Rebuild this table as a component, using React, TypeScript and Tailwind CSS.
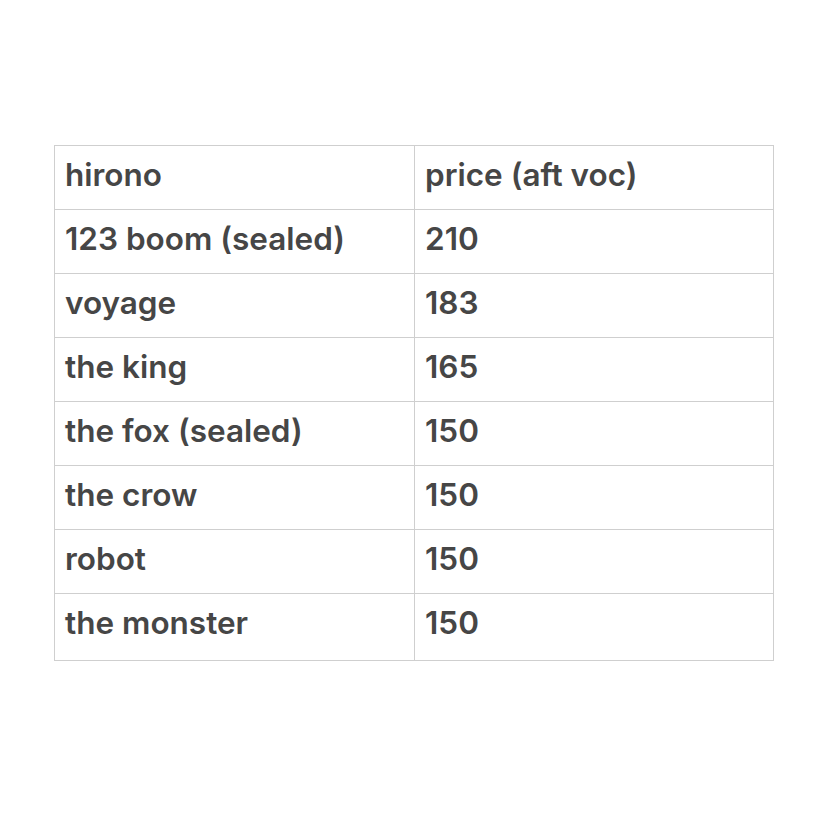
export default function App() {
  const rows: [string, string][] = [
    ["hirono", "price (aft voc)"],
    ["123 boom (sealed)", "210"],
    ["voyage", "183"],
    ["the king", "165"],
    ["the fox (sealed)", "150"],
    ["the crow", "150"],
    ["robot", "150"],
    ["the monster", "150"],
  ];
  return (
    <div className="w-[828px] h-[828px] bg-white pt-[145px] pl-[54px]" style={{ fontFamily: "Inter, 'Noto Sans', sans-serif" }}>
      <div className="w-[720px] border border-[#cfcfcf]">
        {rows.map((r, i) => {
          const last = i === rows.length - 1;
          const pad = last ? "pb-[9px]" : "pb-[6px]";
          return (
            <div
              key={i}
              className={`flex ${i === 0 ? "h-[63px]" : last ? "h-[67px] border-t border-[#cfcfcf]" : "h-[64px] border-t border-[#cfcfcf]"}`}
            >
              <div className={`w-[360px] border-r border-[#cfcfcf] pl-[10px] ${pad} flex items-center text-[31.5px] font-semibold text-[#464646]`}>
                {r[0]}
              </div>
              <div className={`flex-1 pl-[10px] ${pad} flex items-center text-[31.5px] font-semibold text-[#464646]`}>
                {r[1]}
              </div>
            </div>
          );
        })}
      </div>
    </div>
  );
}
